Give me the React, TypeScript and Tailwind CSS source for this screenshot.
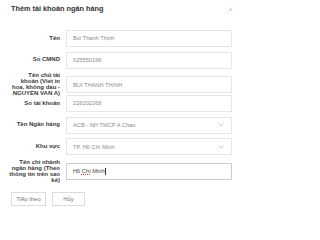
import React from "react";

const rows: { label: string[]; value: string; select?: boolean; focused?: boolean }[] = [
  { label: ["Tên"], value: "Bùi Thanh Thịnh" },
  { label: ["Số CMND"], value: "025550166" },
  { label: ["Tên chủ tài", "khoản (Viết in", "hoa, không dấu -", "NGUYEN VAN A)"], value: "BUI THANH THINH" },
  { label: ["Số tài khoản"], value: "228202268" },
  { label: ["Tên Ngân hàng"], value: "ACB - NH TMCP A Chau", select: true },
  { label: ["Khu vực"], value: "TP. Hồ Chí Minh", select: true },
  { label: ["Tên chi nhánh", "ngân hàng (Theo", "thông tin trên sao", "kê)"], value: "", focused: true },
];

function Chevron() {
  return (
    <svg width="6" height="4" viewBox="0 0 6 4" className="shrink-0">
      <polyline points="0.5,0.6 3,3 5.5,0.6" fill="none" stroke="#b8b8b8" strokeWidth="0.7" />
    </svg>
  );
}

export default function App() {
  return (
    <div className="w-[241px] h-[209px] bg-white overflow-hidden font-['Liberation_Sans',Arial,sans-serif]">
      {/* Header */}
      <div className="flex items-center justify-between pl-[11px] pr-[8px] pt-[4px] h-[15px]">
        <span className="text-[7.3px] font-bold text-[#333]">Thêm tài khoản ngân hàng</span>
        <svg width="5" height="5" viewBox="0 0 5 5">
          <path d="M0.6 0.6 L4.4 4.4 M4.4 0.6 L0.6 4.4" stroke="#b0b0b0" strokeWidth="0.6" />
        </svg>
      </div>

      {/* Form */}
      <div className="mt-[15px] flex flex-col gap-[4.7px]">
        {rows.map((r) => (
          <div key={r.label.join(" ")} className="grid grid-cols-[60px_166px] gap-x-[6px] items-center h-[17px]">
            <div className="flex flex-col items-end text-[6px] leading-[5.8px] font-bold text-[#3a3a3a] whitespace-nowrap">
              {r.label.map((l) => (
                <span key={l}>{l}</span>
              ))}
            </div>
            <div
              className={`h-[17px] flex items-center justify-between pl-[6px] pr-[7px] border bg-white ${
                r.focused ? "border-[#cdcdcd]" : "border-[#e6e6e6]"
              }`}
            >
              {r.focused ? (
                <span className="text-[5.7px] text-[#444] flex items-center whitespace-pre">
                  {"Hồ "}
                  <span className="underline decoration-dotted decoration-[#e33] decoration-[0.8px] underline-offset-[1.2px]">
                    Chí
                  </span>
                  {" Minh"}
                  <span className="inline-block w-[0.6px] h-[7px] bg-[#333] ml-[0.3px]" />
                </span>
              ) : (
                <span className="text-[5.7px] text-[#8c8c8c] whitespace-nowrap">{r.value}</span>
              )}
              {r.select && <Chevron />}
            </div>
          </div>
        ))}
      </div>

      {/* Buttons */}
      <div className="flex gap-[6px] pl-[11px] mt-[15px]">
        <button className="w-[35px] h-[14px] border border-[#dcdcdc] bg-white text-[5.9px] text-[#777]">Tiếp theo</button>
        <button className="w-[33px] h-[14px] border border-[#dcdcdc] bg-white text-[5.9px] text-[#777]">Hủy</button>
      </div>
    </div>
  );
}
